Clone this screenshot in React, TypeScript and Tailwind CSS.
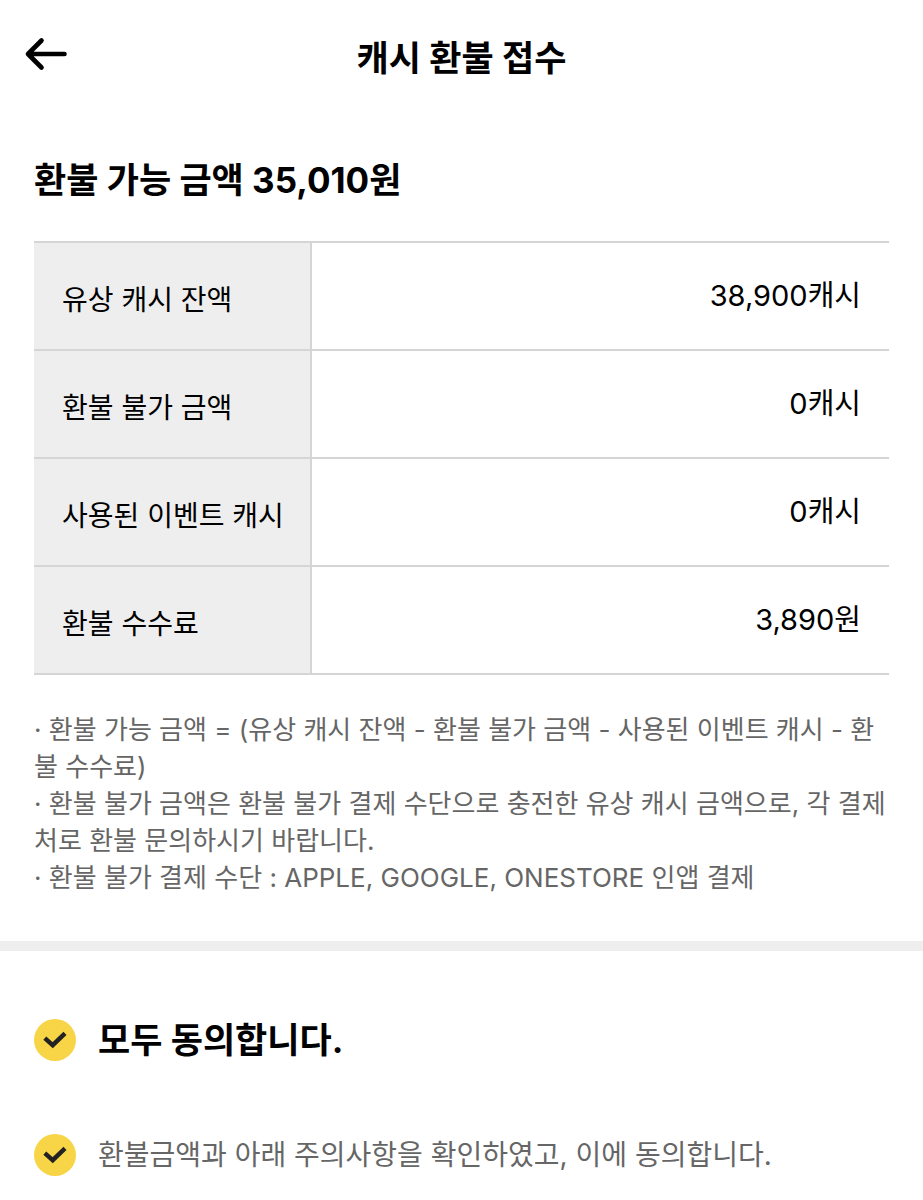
import { useState } from 'react';

const rows = [
  { label: '유상 캐시 잔액', value: '38,900캐시' },
  { label: '환불 불가 금액', value: '0캐시' },
  { label: '사용된 이벤트 캐시', value: '0캐시' },
  { label: '환불 수수료', value: '3,890원' },
];

const notes = [
  '환불 가능 금액 = (유상 캐시 잔액 - 환불 불가 금액 - 사용된 이벤트 캐시 - 환불 수수료)',
  '환불 불가 금액은 환불 불가 결제 수단으로 충전한 유상 캐시 금액으로, 각 결제처로 환불 문의하시기 바랍니다.',
  '환불 불가 결제 수단 : APPLE, GOOGLE, ONESTORE 인앱 결제',
];

export default function App() {
  const [agreed, setAgreed] = useState(true);

  return (
    <div className="min-h-screen bg-white font-['Inter','Noto_Sans_CJK_KR',sans-serif] text-black">
      <header className="grid grid-cols-[1fr_auto_1fr] items-start px-6 pt-9 pb-8">
        <button type="button" aria-label="뒤로" className="w-11">
          <svg viewBox="0 0 44 36" className="h-9 w-11" fill="none" stroke="currentColor" strokeWidth="4.6" strokeLinecap="round" strokeLinejoin="round">
            <path d="M17.5 4.5 4 18l13.5 13.5M4 18h36.5" />
          </svg>
        </button>
        <h1 className="text-[35px] leading-11 font-bold">캐시 환불 접수</h1>
      </header>

      <main>
        <section className="px-[34px] pt-11 pb-[45px]">
          <h2 className="text-[35px] leading-12 font-bold">환불 가능 금액 35,010원</h2>
          <table className="mt-[37px] w-full border-t-2 border-[#d5d5d5]">
            <tbody>
              {rows.map((row) => (
                <tr key={row.label} className="h-[108px] border-b-2 border-[#d5d5d5]">
                  <th scope="row" className="w-[277px] border-r-2 border-[#d5d5d5] bg-[#eee] pt-2 pr-6 pl-7 text-left text-[28px] font-normal whitespace-nowrap">
                    {row.label}
                  </th>
                  <td className="px-7 text-right text-[29px]">{row.value}</td>
                </tr>
              ))}
            </tbody>
          </table>
          <ul className="mt-9 text-[26px] leading-[37px] text-[#666]">
            {notes.map((note) => (
              <li key={note}>{`· ${note}`}</li>
            ))}
          </ul>
        </section>

        <div className="h-2.5 bg-[#eee]" />

        <section className="flex flex-col gap-[67px] px-[34px] pt-[65px]">
          <Agreement checked={agreed} onChange={setAgreed}>
            <span className="text-[35px] leading-12 font-bold">모두 동의합니다.</span>
          </Agreement>
          <Agreement checked={agreed} onChange={setAgreed}>
            <span className="text-[28px] leading-12 text-[#666]">
              환불금액과 아래 주의사항을 확인하였고, 이에 동의합니다.
            </span>
          </Agreement>
        </section>
      </main>
    </div>
  );
}

type AgreementProps = {
  checked: boolean;
  onChange: (checked: boolean) => void;
  children: React.ReactNode;
};

function Agreement({ checked, onChange, children }: AgreementProps) {
  return (
    <label className="flex cursor-pointer items-center gap-[22px]">
      <span className="grid shrink-0 place-items-center">
        <input
          type="checkbox"
          checked={checked}
          onChange={(e) => onChange(e.target.checked)}
          className="col-start-1 row-start-1 h-[42px] w-[42px] appearance-none rounded-full bg-[#ddd] checked:bg-[#f7d547]"
        />
        <svg viewBox="0 0 42 42" className="pointer-events-none col-start-1 row-start-1 h-[42px] w-[42px]" fill="none" stroke="#222" strokeWidth="4.4">
          <path d="m10.8 19.2 7.9 7 12.3-11.8" />
        </svg>
      </span>
      {children}
    </label>
  );
}
